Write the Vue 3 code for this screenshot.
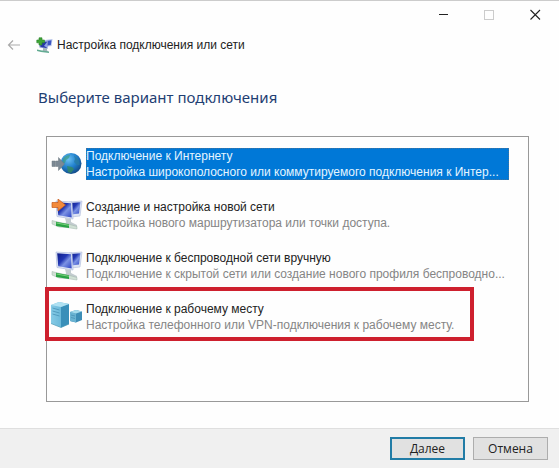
<script setup>
import { ref } from 'vue'

const selected = ref(0)
const options = [
  { icon: 'globe', title: 'Подключение к Интернету', text: 'Настройка широкополосного или коммутируемого подключения к Интер...' },
  { icon: 'network', arrow: true, title: 'Создание и настройка новой сети', text: 'Настройка нового маршрутизатора или точки доступа.' },
  { icon: 'network', title: 'Подключение к беспроводной сети вручную', text: 'Подключение к скрытой сети или создание нового профиля беспроводно...' },
  { icon: 'servers', marked: true, title: 'Подключение к рабочему месту', text: 'Настройка телефонного или VPN-подключения к рабочему месту.' }
]
</script>

<template>
  <div class="window">
    <svg class="defs" aria-hidden="true">
      <defs>
        <linearGradient id="screen" x1="0" y1="0" x2="1" y2="1">
          <stop offset="0" stop-color="#0c1a86" /><stop offset=".4" stop-color="#2338b4" />
          <stop offset=".6" stop-color="#7c93e4" /><stop offset="1" stop-color="#2c44c4" />
        </linearGradient>
        <radialGradient id="sea" cx=".38" cy=".3" r=".75">
          <stop offset="0" stop-color="#6cc0f2" /><stop offset=".5" stop-color="#2383cf" /><stop offset="1" stop-color="#114682" />
        </radialGradient>
        <linearGradient id="tower" x1="0" y1="0" x2="1" y2="0">
          <stop offset="0" stop-color="#86cbe6" /><stop offset="1" stop-color="#55abd0" />
        </linearGradient>
      </defs>
    </svg>

    <header class="titlebar">
      <div class="controls">
        <button type="button" aria-label="Свернуть">
          <svg width="12" height="12" viewBox="0 0 12 12"><path d="M1 5.500H10" stroke="#222" /></svg>
        </button>
        <button type="button" aria-label="Развернуть" disabled>
          <svg width="12" height="12" viewBox="0 0 12 12"><rect x=".5" y="1.500" width="9" height="9" fill="none" stroke="#ccc" /></svg>
        </button>
        <button type="button" aria-label="Закрыть">
          <svg width="12" height="12" viewBox="0 0 12 12"><path d="M.5 1L10 10.500M10 1L.5 10.500" stroke="#222" stroke-width="1.100" /></svg>
        </button>
      </div>
      <div class="caption">
        <button type="button" class="back" aria-label="Назад">
          <svg width="14" height="12" viewBox="0 0 14 12"><path d="M13 6H1.500M6 1.500L1.500 6L6 10.500" fill="none" stroke="#aaa" stroke-width="1.200" /></svg>
        </button>
        <svg width="17" height="17" viewBox="0 0 17 17" aria-hidden="true">
          <path d="M9 3L16.500 2L15.500 9L9 10Z" fill="#b9c6ea" />
          <path d="M10 4L15.500 3.200L14.800 8L10 8.800Z" fill="#3c55c2" />
          <path d="M3 4H12L11.500 12L3.500 10.500Z" fill="#8795d2" />
          <path d="M4.200 5H11L10.600 11L4.500 9.700Z" fill="#2638a8" />
          <path d="M8 9L11 5V10.500Z" fill="#90a4e6" />
          <path d="M7 11L11 11.500V13L12 15H6L7 13Z" fill="#a5b5ba" />
          <path d="M1 12.500L6 13.500L13 14.500V16L5 15L1 14Z" fill="#62ab92" />
          <path d="M3 .8H6V3H8.500V5.800H6V8H3V5.800H.8V3H3Z" fill="#3fa636" stroke="#28812a" stroke-width=".6" />
        </svg>
        <span>Настройка подключения или сети</span>
      </div>
    </header>

    <main class="content">
      <h1>Выберите вариант подключения</h1>
      <div class="list">
        <button
          v-for="(option, index) in options"
          :key="option.title"
          type="button"
          class="option"
          :class="{ selected: selected === index, marked: option.marked }"
          :aria-pressed="selected === index"
          @click="selected = index"
        >
          <svg v-if="option.icon === 'globe'" class="icon" viewBox="0 0 32 32" aria-hidden="true">
            <circle cx="20" cy="15.500" r="10.500" fill="url(#sea)" />
            <path d="M12 11C14 8 16 7 19 7L18 10L15 12L14 15L11.500 15Z" fill="#3b9b72" opacity=".6" />
            <path d="M23 7.500C27 10 29 13 28.500 17L26 17L23 14L24 11Z" fill="#287ca3" opacity=".8" />
            <path d="M16 18L21 19L23 21L20 25L17 24Z" fill="#358c5c" opacity=".75" />
            <path d="M1 13H4V18.500H1ZM4.500 13H7.500V9.500L13.500 16L7.500 22.500V18.500H4.500Z" fill="#7c8994" stroke="#6c7881" stroke-width=".5" />
          </svg>
          <svg v-else-if="option.icon === 'network'" class="icon" viewBox="0 0 32 32" aria-hidden="true">
            <path d="M18 3L31 2L29 17L20 18Z" fill="#dce4f4" stroke="#aebbdc" stroke-width=".6" />
            <path d="M19 4L29.500 3.200L28 14.500L20 15.500Z" fill="url(#screen)" />
            <path d="M5 2L21 3L22 20L6 17.500Z" fill="#e0e7f6" stroke="#a6b4d8" stroke-width=".6" />
            <path d="M6.200 3.200L20 4.200L20.700 18.500L7.200 16.300Z" fill="url(#screen)" />
            <path d="M14 19L20 20V23L26 26V28L14 26L15 23Z" fill="#c3cccf" />
            <path d="M1 21.500L9 23.500L17 25L26 27.500V30L16 28.500L8 28L1 25Z" fill="#d1e0d5" stroke="#9eb4a8" stroke-width=".5" />
            <path d="M5 22.800L18 25.300V29L5 27Z" fill="#29a344" />
            <path d="M5.500 24L18 26.300" stroke="#7bd07c" />
            <path v-if="option.arrow" d="M1 3.500H7V0L14.500 6L7 12V8.500H1Z" fill="#f28a3c" stroke="#c65a1c" stroke-width=".7" />
          </svg>
          <svg v-else class="icon" viewBox="0 0 32 32" aria-hidden="true">
            <path d="M19 11L25 9L31 10.500V19L25 21.500L19 20Z" fill="#3d8db6" />
            <path d="M19 11L25 12.500V21.500L19 20Z" fill="#6ab3d2" />
            <path d="M19 11L25 9L31 10.500L25 12.500Z" fill="#a5dbec" />
            <path d="M0 4L8 1L18 3V23L10 26.500L0 22.500Z" fill="url(#tower)" />
            <path d="M10 6L18 3V23L10 26.500Z" fill="#398fb9" />
            <path d="M0 4L8 1L18 3L10 6Z" fill="#afe1f2" />
            <path d="M1.500 7L8.500 9M1.500 10L8.500 12M1.500 13L8.500 15M20 14L24 15M20 16.500L24 17.500" stroke="#4792b6" stroke-width=".8" />
            <path d="M0 22.500L10 26.500L18 23" fill="none" stroke="#4f9bb6" stroke-width=".7" />
          </svg>
          <span class="label">
            <span class="title">{{ option.title }}</span>
            <span class="text">{{ option.text }}</span>
          </span>
        </button>
      </div>
    </main>

    <footer class="footer">
      <button type="button" class="action primary">Далее</button>
      <button type="button" class="action">Отмена</button>
    </footer>
  </div>
</template>

<style>
body {
  margin: 0;
}
</style>

<style scoped>
.window {
  box-sizing: border-box;
  display: flex;
  flex-direction: column;
  min-height: 100vh;
  border-top: 1px solid #ccc;
  background: #fefefe;
  color: #222;
  font: 12px/16px "Liberation Sans", Arial, sans-serif;
}
.defs {
  position: absolute;
  width: 0;
  height: 0;
}
button {
  padding: 0;
  border: 0;
  background: none;
  color: inherit;
  font: inherit;
}
.controls {
  display: flex;
  justify-content: flex-end;
}
.controls button {
  display: grid;
  place-items: center;
  width: 46px;
  height: 28px;
}
.caption {
  display: flex;
  align-items: center;
  height: 32px;
  padding-left: 7px;
}
.caption span {
  margin-left: 4px;
}
.back {
  display: flex;
  margin-right: 15px;
}
.content {
  display: flex;
  flex: 1;
  flex-direction: column;
  padding: 24px 30px 26px 38px;
}
h1 {
  margin: 0 0 27px;
  color: #1f3f73;
  font: 400 15px/24px "Noto Sans", "Open Sans", sans-serif;
}
.list {
  display: flex;
  flex: 1;
  flex-direction: column;
  gap: 19px;
  margin-left: 8px;
  padding: 11px 19px 11px 4px;
  border: 1px solid #999;
}
.option {
  position: relative;
  display: flex;
  align-items: center;
  gap: 3px;
  height: 32px;
  text-align: left;
}
.icon {
  flex: none;
  width: 32px;
  height: 32px;
}
.label {
  display: flex;
  flex: 1;
  flex-direction: column;
  min-width: 0;
}
.title,
.text {
  overflow: hidden;
  text-overflow: ellipsis;
  white-space: nowrap;
}
.text {
  color: #858585;
}
.selected .label {
  background: #0078d7;
  outline: 1px dotted #44729b;
  outline-offset: -1px;
}
.selected .title,
.selected .text {
  color: #e4f5ff;
}
.marked::after {
  position: absolute;
  inset: -14px 35px -8px -6px;
  border: 4px solid #ce202e;
  content: "";
}
.footer {
  display: flex;
  justify-content: flex-end;
  gap: 8px;
  padding: 8px 11px;
  border-top: 1px solid #dfdfdf;
  background: #f0f0f0;
}
.action {
  width: 75px;
  height: 23px;
  border: 1px solid #adadad;
  background: #e1e1e1;
  font-family: "Open Sans", "Noto Sans", sans-serif;
}
.primary {
  border: 2px solid #217ca6;
}
</style>
